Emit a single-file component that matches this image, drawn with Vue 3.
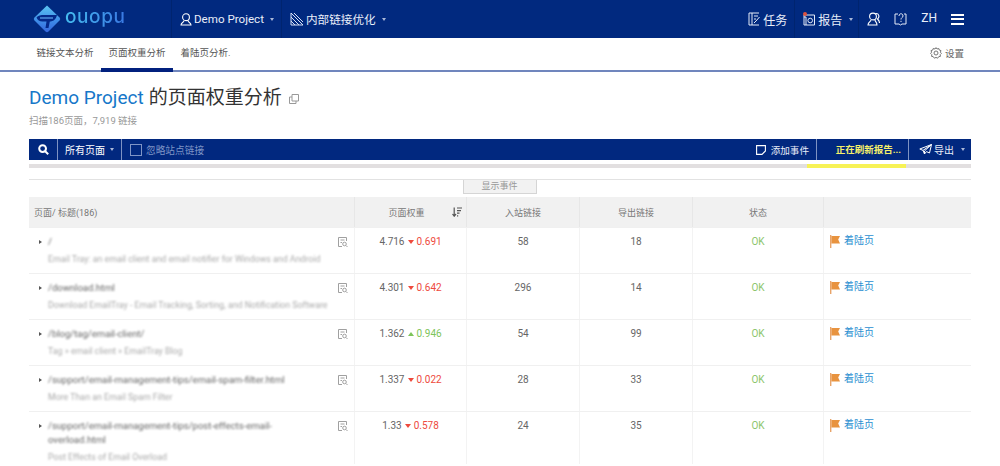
<script setup>
const rows = [
  { url: '/', desc: 'Email Tray: an email client and email notifier for Windows and Android', rank: '4.716', up: false, delta: '0.691', inb: 58, out: 18 },
  { url: '/download.html', desc: 'Download EmailTray - Email Tracking, Sorting, and Notification Software', rank: '4.301', up: false, delta: '0.642', inb: 296, out: 14 },
  { url: '/blog/tag/email-client/', desc: 'Tag » email client » EmailTray Blog', rank: '1.362', up: true, delta: '0.946', inb: 54, out: 99 },
  { url: '/support/email-management-tips/email-spam-filter.html', desc: 'More Than an Email Spam Filter', rank: '1.337', up: false, delta: '0.022', inb: 28, out: 33 },
  { url: '/support/email-management-tips/post-effects-email-overload.html', desc: 'Post Effects of Email Overload', rank: '1.33', up: false, delta: '0.578', inb: 24, out: 35 },
]
</script>

<template>
  <div class="page">
    <header class="topbar">
      <div class="brand">
        <svg width="28" height="28" viewBox="0 0 28 28" class="logo-mark">
          <defs>
            <linearGradient id="lg" x1="0.5" y1="0" x2="0.5" y2="1">
              <stop offset="0" stop-color="#5cc4f2" />
              <stop offset="0.55" stop-color="#3f8ee8" />
              <stop offset="1" stop-color="#3566dd" />
            </linearGradient>
          </defs>
          <path d="M14 0.5 L26.5 12.5 Q28 14 26.5 15.5 L15.5 26.5 Q14 28 12.5 26.5 L1.5 15.5 Q0 14 1.5 12.5 Z" fill="url(#lg)" />
          <path d="M3.5 12.5 C5 10.5 8 10 11 10 H24 C23 14.5 20 16.5 16.8 16.5 L15.5 23 H12.5 L13.5 16.5 H9.5 C6.5 16.5 4.5 15 3.5 12.5 Z" fill="#04298a" />
          <path d="M7 13 H20" stroke="#5fa7ee" stroke-width="1.2" />
        </svg>
        <span class="logo-text">ouopu</span>
      </div>
      <div class="nav-item first">
        <svg width="12" height="13" viewBox="0 0 12 13" fill="none" stroke="#fff" stroke-width="1.1"><circle cx="6" cy="4.2" r="3.4" /><path d="M4 7.5 C4 9.5 1 9.5 1 12 H11 C11 9.5 8 9.5 8 7.5" /></svg>
        <span>Demo Project</span><i class="caret"></i>
      </div>
      <div class="nav-item second">
        <svg width="14" height="14" viewBox="0 0 14 14" fill="none" stroke="#d7e0f5" stroke-width="1"><path d="M1 13 V1 L13 13 Z M1 5 L9 13 M1 9 L5 13 M4 1 L13 10" /></svg>
        <span>内部链接优化</span><i class="caret"></i>
      </div>
      <div class="spacer"></div>
      <div class="nav-right">
        <div class="r-item task">
          <svg width="12" height="14" viewBox="0 0 12 14" fill="none" stroke="#e5ebf8" stroke-width="1"><path d="M11 1 H1 V13 H11 M4 1 V13 M6 4 H10 M6 7 H8 M6 11 L8 9 L11.5 5" /></svg>
          <span>任务</span>
        </div>
        <div class="r-item report">
          <span class="report-ic">
            <svg width="12" height="13" viewBox="0 0 12 13" fill="none" stroke="#e5ebf8" stroke-width="1"><path d="M1 12 V2 H11.5 V12 Z M1 4 H3 V12" /><circle cx="7.2" cy="7.5" r="2.3" /></svg>
            <b class="dot"></b>
          </span>
          <span>报告</span><i class="caret"></i>
        </div>
        <div class="r-item people">
          <svg width="13" height="14" viewBox="0 0 13 14" fill="none" stroke="#fff" stroke-width="1.1"><circle cx="6" cy="4.5" r="3.4" /><path d="M4 8 C4 9.5 1 10 1 13 H10 C10 10 8 9.5 8 8 M8.5 1.5 C12 1 13 5 10.5 7 C11.5 8 12.5 9 12.5 11" /></svg>
        </div>
        <div class="r-item help">
          <svg width="13" height="14" viewBox="0 0 13 14" fill="none" stroke="#e5ebf8" stroke-width="1"><path d="M4 2 H1 V12 H5 L6.5 13 L8 12 H12 V2 H10" /><path d="M5 4 C5 1 9 1 9 4 C9 5.5 7 5.5 7 7.5 M7 8.8 V10" /></svg>
        </div>
        <div class="r-item lang">ZH</div>
        <div class="burger"><i></i><i></i><i></i></div>
      </div>
    </header>

    <nav class="subnav">
      <a class="tab">链接文本分析</a>
      <a class="tab active">页面权重分析</a>
      <a class="tab">着陆页分析.</a>
      <div class="spacer"></div>
      <div class="settings">
        <svg width="12" height="12" viewBox="0 0 12 12" fill="none" stroke="#777" stroke-width="1"><circle cx="6" cy="6" r="2" /><path d="M6 .6 L7 2 L8.8 1.5 L9.2 3 L11 3.6 L10.4 5.2 L11.4 6.4 L10.2 7.6 L10.4 9.4 L8.8 9.6 L7.6 11.2 L6 10.4 L4.4 11.2 L3.2 9.6 L1.6 9.4 L1.8 7.6 L.6 6.4 L1.6 5.2 L1 3.6 L2.8 3 L3.2 1.5 L5 2 Z" /></svg>
        <span>设置</span>
      </div>
    </nav>

    <main class="content">
      <h1 class="title">
        <span class="proj">Demo Project</span><span class="title-rest">的页面权重分析</span>
        <svg class="copy" width="10" height="10" viewBox="0 0 10 10" fill="none" stroke="#999" stroke-width="1"><path d="M3 .5 H9.5 V7 H3 Z" /><path d="M3 3 H.5 V9.5 H7 V7" /></svg>
      </h1>
      <p class="sub">扫描186页面，7,919 链接</p>

      <div class="toolbar">
        <div class="t-search">
          <svg width="11" height="11" viewBox="0 0 11 11" fill="none" stroke="#fff" stroke-width="2"><circle cx="4.6" cy="4.6" r="3.4" /><path d="M7.2 7.2 L10.2 10.2" /></svg>
        </div>
        <div class="t-pages"><span>所有页面</span><i class="caret"></i></div>
        <label class="t-ignore"><i class="box"></i><span>忽略站点链接</span></label>
        <div class="spacer"></div>
        <div class="t-event">
          <svg width="10" height="10" viewBox="0 0 10 10" fill="none" stroke="#fff" stroke-width="1.1"><path d="M9.4 6 V.6 H.6 V9.4 H6 Z M6 9.4 L9.4 6" /></svg>
          <span>添加事件</span>
        </div>
        <div class="t-refresh">正在刷新报告...</div>
        <div class="t-export">
          <svg width="13" height="11" viewBox="0 0 13 11" fill="none" stroke="#fff" stroke-width="1"><path d="M12.5 .5 L.8 5 L4 6.4 L5.5 10 L7.4 7.6 L10.5 9 Z M4 6.4 L12.5 .5 M5.5 10 V7 L12.5 .5" /></svg>
          <span>导出</span><i class="caret"></i>
        </div>
      </div>

      <div class="progress"><div class="progress-fill"></div></div>

      <div class="events"><button class="events-btn">显示事件</button></div>

      <div class="grid head">
        <div class="cell h-first">页面/ 标题(186)</div>
        <div class="cell h-center rank-h">
          <span>页面权重</span>
          <svg class="sort" width="10" height="10" viewBox="0 0 10 10" fill="none" stroke="#555" stroke-width="1.2"><path d="M2.2 .5 V9 M.5 7 L2.2 9.2 L4 7" /><path d="M5 1 H10 M5 3.6 H9 M5 6.2 H7.5 M5 8.8 H6.2" /></svg>
        </div>
        <div class="cell h-center">入站链接</div>
        <div class="cell h-center">导出链接</div>
        <div class="cell h-center">状态</div>
        <div class="cell"></div>
      </div>

      <div v-for="r in rows" :key="r.url" class="grid row">
        <div class="cell page-cell">
          <i class="arrow"></i>
          <div class="page-text">
            <div class="url">{{ r.url }}</div>
            <div class="desc">{{ r.desc }}</div>
          </div>
          <svg class="inspect" width="10" height="11" viewBox="0 0 10 11" fill="none" stroke="#a0a0a0" stroke-width="1"><path d="M8.5 4 V.5 H.5 V9.5 H4" /><path d="M2.5 3 H6.5 M2.5 5.5 H4" /><circle cx="6.5" cy="7" r="1.8" /><path d="M8 8.5 L9.5 10" /></svg>
        </div>
        <div class="cell num">
          <span class="rank">{{ r.rank }}</span>
          <i :class="r.up ? 'tri up' : 'tri down'"></i>
          <span :class="r.up ? 'green' : 'red'">{{ r.delta }}</span>
        </div>
        <div class="cell num">{{ r.inb }}</div>
        <div class="cell num">{{ r.out }}</div>
        <div class="cell num ok">OK</div>
        <div class="cell landing">
          <svg width="11" height="13" viewBox="0 0 11 13"><path d="M0 0 H1.4 V13 H0 Z" fill="#e8a469" /><path d="M1.4 1 H10 L8.2 4.5 L10 8.5 H1.4 Z" fill="#e8933f" /></svg>
          <a>着陆页</a>
        </div>
      </div>
    </main>
  </div>
</template>

<style>
html, body { margin: 0; height: 466px; overflow: hidden; background: #fff; }
</style>

<style scoped>
.page { width: 1000px; height: 466px; overflow: hidden; font-family: Roboto, "Noto Sans CJK SC", sans-serif; color: #444; }
.spacer { flex: 1; }
.topbar { height: 38px; background: #01297f; display: flex; align-items: center; color: #fff; font-size: 12px; }
.brand { width: 171px; padding-left: 33px; box-sizing: border-box; display: flex; align-items: center; height: 38px; flex: none; }
.logo-mark { flex: none; margin-top: -1px; }
.logo-text { font-family: Inter, sans-serif; font-size: 19px; font-weight: 500; letter-spacing: 0.6px; margin-left: 4px; line-height: 22px; margin-top: -4px; background: linear-gradient(90deg, #45bdf0, #3a78e2); -webkit-background-clip: text; background-clip: text; color: transparent; }
.nav-item { height: 38px; display: flex; align-items: center; gap: 2px; padding-left: 8px; border-left: 1px solid #00246f; white-space: nowrap; box-sizing: border-box; flex: none; font-size: 11.6px; }
.nav-item.first { width: 110px; }
.nav-item span { color: #e9eef9; }
.caret { display: inline-block; flex: none; width: 0; height: 0; border-left: 2.5px solid transparent; border-right: 2.5px solid transparent; border-top: 3px solid #aab8d8; margin-left: 5px; }
.nav-item .caret { margin-left: 4px; }
.nav-right { display: flex; align-items: center; height: 38px; flex: none; }
.r-item { display: flex; align-items: center; gap: 3px; height: 38px; box-sizing: border-box; color: #e9eef9; white-space: nowrap; }
.task { padding-right: 7px; }
.report { border-left: 1px solid #00246f; border-right: 1px solid #00246f; padding: 0 0 0 8px; width: 65px; flex: none; }
.report .caret { margin-left: 4px; }
.report-ic { position: relative; display: flex; }
.dot { position: absolute; left: 0; top: -1px; width: 4px; height: 4px; border-radius: 50%; background: #e0533e; }
.people { margin-left: 8px; }
.help { margin-left: 14px; }
.lang { margin-left: 14px; margin-top: -3px; }
.burger { width: 13px; margin: 0 36px 0 14px; display: flex; flex-direction: column; gap: 2.5px; }
.burger i { display: block; height: 2px; background: #fff; }
.subnav { height: 32px; display: flex; align-items: stretch; border-bottom: 2px solid #7086bd; padding-left: 29px; font-size: 9.5px; background: #fff; }
.tab { width: 72px; text-align: center; line-height: 30px; color: #555; height: 30px; }
.tab:nth-child(3) { width: 65px; }
.tab.active { border-bottom: 4px solid #01207e; }
.settings { display: flex; align-items: center; gap: 3px; margin-right: 36px; margin-top: -2px; color: #666; font-size: 9.5px; }
.content { padding: 0 29px; }
.title { margin: 14px 0 0; height: 24px; line-height: 24px; font-size: 19px; font-weight: 400; color: #333; display: flex; align-items: center; white-space: nowrap; }
.proj { color: #1677c9; }
.title-rest { margin-left: 5px; }
.copy { margin-left: 7px; margin-top: 2px; }
.sub { margin: 4px 0 0; font-size: 9.5px; line-height: 14px; color: #999; }
.toolbar { margin-top: 11px; height: 21px; background: #01287f; display: flex; align-items: center; color: #fff; font-size: 10px; }
.t-search { width: 29px; height: 21px; display: flex; align-items: center; justify-content: center; border-right: 1px solid #7e93c3; box-sizing: border-box; }
.t-pages { width: 64px; height: 21px; display: flex; align-items: center; padding-left: 7px; box-sizing: border-box; border-right: 1px solid #7e93c3; white-space: nowrap; }
.t-ignore { display: flex; align-items: center; gap: 4px; padding-left: 8px; color: #7f95c6; font-size: 9.7px; }
.box { width: 10px; height: 10px; border: 1px solid #7f95c6; display: block; }
.t-event { display: flex; align-items: center; gap: 5px; padding-right: 7px; color: #e9eef9; font-size: 9.6px; }
.t-refresh { width: 93px; height: 21px; line-height: 21px; text-align: right; padding-right: 7px; box-sizing: border-box; color: #f6f06a; font-weight: 700; font-size: 9.5px; border-left: 1px solid #7e93c3; border-right: 1px solid #7e93c3; white-space: nowrap; }
.t-export { width: 62px; box-sizing: border-box; padding-left: 10px; display: flex; align-items: center; gap: 2px; color: #e9eef9; }
.progress { margin-top: 4px; height: 4px; background: #e2dfe0; position: relative; }
.progress-fill { position: absolute; left: 778px; width: 99px; top: 0; bottom: 0; background: #f7f255; }
.events { margin-top: 11px; border-top: 1px solid #e2e2e2; display: flex; justify-content: center; }
.events-btn { width: 74px; height: 14px; padding: 0; border: 1px solid #d5d5d5; border-top: 0; background: #f2f2f2; color: #999; font: 9px/13px Roboto, "Noto Sans CJK SC", sans-serif; margin-left: -1px; }
.grid { display: grid; grid-template-columns: 326px 112px 113px 113px 131px 147px; }
.head { margin-top: 3px; height: 30px; background: #f1f1f1; font-size: 9px; color: #777; }
.head .cell { border-right: 1px solid #e7e7e7; display: flex; align-items: center; }
.head .cell:last-child { border-right: 0; }
.h-first { padding-left: 5px; }
.h-center { justify-content: center; }
.rank-h { position: relative; padding-right: 8px; }
.sort { position: absolute; right: 4px; top: 10px; }
.row { height: 46px; box-sizing: border-box; border-top: 1px solid #f0f0f0; font-size: 10px; color: #666; }
.row .cell { border-right: 1px solid #f3f3f3; }
.row .cell:last-child { border-right: 0; }
.page-cell { position: relative; padding: 7px 32px 0 10px; display: flex; gap: 6px; }
.arrow { flex: none; width: 0; height: 0; margin-top: 5px; border-top: 2.5px solid transparent; border-bottom: 2.5px solid transparent; border-left: 3px solid #555; }
.page-text { min-width: 0; }
.url { font-size: 9.5px; line-height: 14px; color: #666; filter: blur(0.9px); }
.desc { font-size: 8.8px; line-height: 14px; margin-top: 3px; color: #aaa; white-space: nowrap; filter: blur(1.1px); }
.inspect { position: absolute; right: 6px; top: 9px; }
.num { text-align: center; padding-top: 7px; line-height: 14px; }
.rank { margin-right: 3px; }
.tri { display: inline-block; width: 0; height: 0; margin-right: 3px; vertical-align: 1px; border-left: 3px solid transparent; border-right: 3px solid transparent; }
.tri.down { border-top: 4px solid #ee4a3d; }
.tri.up { border-bottom: 4px solid #7dc45a; }
.red { color: #ee4a3d; }
.green { color: #7dc45a; }
.ok { color: #8cc56b; }
.landing { padding: 6px 0 0 6px; display: flex; align-items: flex-start; gap: 3px; line-height: 14px; }
.landing svg { margin-top: 1px; }
.landing a { color: #2b8fd1; }
</style>
